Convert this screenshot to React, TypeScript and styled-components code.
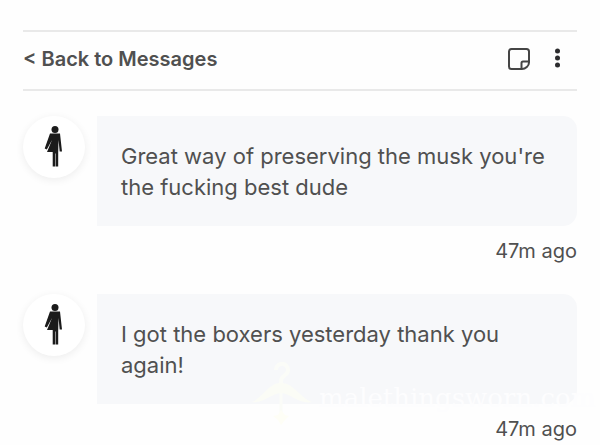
import React from "react";
import styled, { createGlobalStyle } from "styled-components";

const GlobalStyle = createGlobalStyle`
  *, *::before, *::after { box-sizing: border-box; }
  body {
    margin: 0;
    background: #fefefe;
    color: #505050;
    font-family: Inter, "Liberation Sans", sans-serif;
    overflow: hidden;
  }
`;

const Page = styled.main`
  position: relative;
  padding: 30px 23px 0;
`;

const Header = styled.header`
  display: flex;
  align-items: center;
  justify-content: space-between;
  height: 61px;
  padding-bottom: 4px;
  border-top: 2px solid #e9e9e9;
  border-bottom: 2px solid #e9e9e9;
`;

const BackLink = styled.a`
  color: #505050;
  font-size: 20px;
  font-weight: 600;
  line-height: 28px;
  text-decoration: none;
`;

const Actions = styled.div`
  display: flex;
  align-items: center;
  gap: 14px;
  padding-right: 8px;
`;

const IconButton = styled.button`
  display: flex;
  padding: 0;
  border: 0;
  background: none;
  color: #303030;
  cursor: pointer;
`;

const Messages = styled.ul`
  display: flex;
  flex-direction: column;
  gap: 28px;
  margin: 0;
  padding: 25px 0 0;
  list-style: none;
`;

const Message = styled.li`
  display: grid;
  grid-template-columns: 62px 1fr;
  column-gap: 12px;
`;

const Avatar = styled.div`
  display: flex;
  align-items: center;
  justify-content: center;
  width: 62px;
  height: 62px;
  border-radius: 50%;
  background: #ffffff;
  box-shadow: 0 2px 8px rgba(0, 0, 0, 0.07);
`;

const Bubble = styled.p`
  margin: 0;
  padding: 25px 24px 23px;
  border-radius: 0 14px 14px 0;
  background: #f7f8fa;
  font-size: 22px;
  line-height: 31px;
`;

const Time = styled.time`
  grid-column: 2;
  padding-top: 10px;
  font-size: 20px;
  line-height: 30px;
  text-align: right;
`;

const Watermark = styled.div`
  position: absolute;
  left: 251px;
  top: 362px;
  display: flex;
  gap: 6px;
  pointer-events: none;

  svg { flex-shrink: 0; }
`;

const WatermarkText = styled.span`
  padding-top: 18px;
  color: #fdfdfe;
  font-family: "DejaVu Serif", serif;
  font-size: 26px;
  line-height: 36px;
  white-space: nowrap;
`;

const NoteIcon = () => (
  <svg width="24" height="24" viewBox="0 0 24 24" fill="none" stroke="#454545" strokeWidth="2" strokeLinejoin="round">
    <path d="M4.500 2h15A2.500 2.500 0 0 1 22 4.500V15.500C22 19 18.500 22 15 22H4.500A2.500 2.500 0 0 1 2 19.500V4.500A2.500 2.500 0 0 1 4.500 2Z" />
    <path d="M14.500 21.500V16a1.500 1.500 0 0 1 1.500-1.500h5.500" />
  </svg>
);

const MoreIcon = () => (
  <svg width="24" height="24" viewBox="0 0 24 24" fill="#2c2c2e">
    <circle cx="12.500" cy="4" r="2.500" />
    <circle cx="12.500" cy="11" r="2.500" />
    <circle cx="12.500" cy="18" r="2.500" />
  </svg>
);

const PersonIcon = () => (
  <svg width="20" height="42" viewBox="0 0 20 42" fill="#1b1b1b" aria-hidden="true">
    <circle cx="11" cy="3.500" r="3.500" />
    <path d="M6 7.500h10l2 18h-2.300L14.500 14l-.3 13V40.500h-2.500V27.500h-.5v13H8.700V26H3L8 14 2.800 23.500.7 22.500Z" />
  </svg>
);

const HangerIcon = () => (
  <svg width="62" height="66" viewBox="0 0 62 66" fill="none" stroke="#fbfcf8" strokeWidth="4">
    <path d="M25 8a6 6 0 1 1 9 5c-4 3-4 4-4 9" />
    <path d="M1 40C8 38 15 26 24 22q6-2 12 0C45 26 53 38 61 40C49 43 39 31 30 31S12 42 1 40Z" fill="#fbfcf6" stroke="none" />
    <path d="M30 31v22" strokeWidth="3" />
    <path d="m30 48 4 5 4 1-4 4-4 5-3-5-5-4 5-1Z" fill="#fefef6" stroke="none" />
  </svg>
);

const messages = [
  { id: 1, text: "Great way of preserving the musk you're the fucking best dude", time: "47m ago" },
  { id: 2, text: "I got the boxers yesterday thank you again!", time: "47m ago" },
];

export default function App() {
  return (
    <>
      <GlobalStyle />
      <Page>
        <Header>
          <BackLink href="#messages">&lt; Back to Messages</BackLink>
          <Actions>
            <IconButton type="button" aria-label="Notes"><NoteIcon /></IconButton>
            <IconButton type="button" aria-label="More options"><MoreIcon /></IconButton>
          </Actions>
        </Header>
        <Messages>
          {messages.map((message) => (
            <Message key={message.id}>
              <Avatar><PersonIcon /></Avatar>
              <Bubble>{message.text}</Bubble>
              <Time>{message.time}</Time>
            </Message>
          ))}
        </Messages>
        <Watermark aria-hidden="true">
          <HangerIcon />
          <WatermarkText>malethingsworn.com</WatermarkText>
        </Watermark>
      </Page>
    </>
  );
}
